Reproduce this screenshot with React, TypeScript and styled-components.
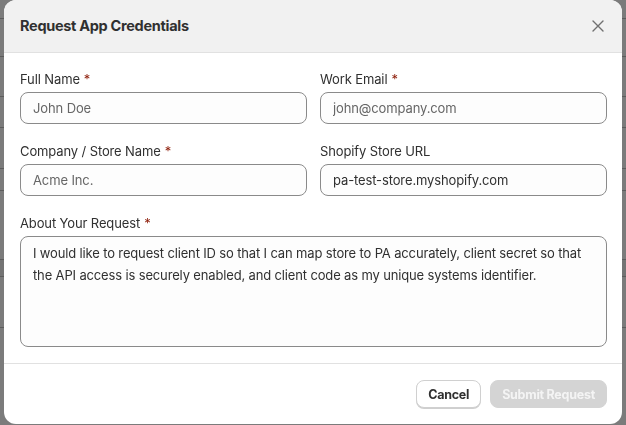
import React from "react";
import styled, { createGlobalStyle } from "styled-components";

const Global = createGlobalStyle`
  html, body {
    margin: 0;
    padding: 0;
    width: 626px;
    height: 425px;
    overflow: hidden;
    background: #7b7b7b;
    font-family: Inter, "Noto Sans", "Liberation Sans", sans-serif;
  }
  * { box-sizing: border-box; }
`;

// page behind the overlay (a table, dimmed)
const Page = styled.div`
  display: flex;
  flex-direction: column;
  width: 626px;
  height: 425px;
`;

const PageRow = styled.div<{ $h: number; $shade?: boolean }>`
  height: ${(p) => p.$h}px;
  flex: none;
  border-bottom: 1px solid #5c5c5c;
  background: ${(p) => (p.$shade ? "#747474" : "transparent")};
`;

const Overlay = styled.div`
  position: fixed;
  inset: 0;
  padding: 0 4px 1px 4px;
  display: flex;
`;

const Modal = styled.div`
  flex: 1;
  display: flex;
  flex-direction: column;
  background: #ffffff;
  border-radius: 12px;
  overflow: hidden;
`;

const Header = styled.div`
  height: 53px;
  flex: none;
  display: flex;
  align-items: center;
  justify-content: space-between;
  padding: 0 14px 1px 16px;
  background: #f1f1f1;
  border-bottom: 1px solid #e1e1e1;
`;

const Title = styled.h2`
  margin: 0;
  font-size: 14.5px;
  font-weight: 650;
  color: #303030;
  letter-spacing: -0.3px;
`;

const CloseBtn = styled.button`
  border: 0;
  background: transparent;
  padding: 0;
  width: 20px;
  height: 20px;
  display: flex;
  align-items: center;
  justify-content: center;
  margin-top: 1px;
`;

const Body = styled.div`
  flex: 1;
  padding: 18px 15px 16px 16px;
  display: flex;
  flex-direction: column;
  gap: 19px;
  border-bottom: 1px solid #e1e1e1;
`;

const Grid = styled.div`
  display: grid;
  grid-template-columns: 1fr 1fr;
  column-gap: 13px;
  row-gap: 19px;
`;

const Field = styled.div`
  display: flex;
  flex-direction: column;
  gap: 5px;
`;

const Label = styled.label`
  font-size: 13px;
  line-height: 16px;
  letter-spacing: -0.12px;
  color: #303030;
`;

const Req = styled.span`
  color: #8e1f0b;
  margin-left: 4px;
`;

const Input = styled.input`
  height: 32px;
  width: 100%;
  border: 1px solid #8a8a8a;
  border-radius: 8px;
  background: #fdfdfd;
  padding: 0 12px;
  font-family: inherit;
  font-size: 13px;
  letter-spacing: -0.12px;
  color: #303030;
  outline: none;
  &::placeholder {
    color: #666666;
  }
`;

const TextArea = styled.textarea`
  height: 111px;
  width: 100%;
  resize: none;
  border: 1px solid #8a8a8a;
  border-radius: 8px;
  background: #fdfdfd;
  padding: 5px 6px 6px 12px;
  font-family: inherit;
  font-size: 13px;
  letter-spacing: -0.15px;
  line-height: 22px;
  color: #303030;
  outline: none;
`;

const Footer = styled.div`
  height: 60px;
  flex: none;
  display: flex;
  align-items: center;
  justify-content: flex-end;
  gap: 9px;
  padding: 0 15px 0 16px;
`;

const Button = styled.button<{ $primary?: boolean }>`
  height: 28px;
  padding: 0 11px;
  border-radius: 8px;
  font-family: inherit;
  font-size: 12.5px;
  font-weight: 650;
  letter-spacing: -0.25px;
  border: 1px solid ${(p) => (p.$primary ? "#d4d4d4" : "#d0d0d0")};
  background: ${(p) => (p.$primary ? "#d4d4d4" : "#ffffff")};
  color: ${(p) => (p.$primary ? "#f4f4f4" : "#303030")};
  box-shadow: ${(p) => (p.$primary ? "none" : "0 1px 0 #cfcfcf")};
`;

const text =
  "I would like to request client ID so that I can map store to PA accurately, client secret so that the API access is securely enabled, and client code as my unique systems identifier.";

export default function App() {
  return (
    <>
      <Global />
      <Page>
        <PageRow $h={19} />
        <PageRow $h={38} />
        <PageRow $h={40} />
        <PageRow $h={31} />
        <PageRow $h={41} />
        <PageRow $h={22} />
        <PageRow $h={69} />
        <PageRow $h={17} $shade />
        <PageRow $h={51} />
      </Page>
      <Overlay>
        <Modal>
          <Header>
            <Title>Request App Credentials</Title>
            <CloseBtn aria-label="Close">
              <svg width="14" height="14" viewBox="0 0 14 14">
                <path d="M2 2 L12 12 M12 2 L2 12" stroke="#707070" strokeWidth="1.4" strokeLinecap="round" />
              </svg>
            </CloseBtn>
          </Header>
          <Body>
            <Grid>
              <Field>
                <Label>Full Name<Req>*</Req></Label>
                <Input placeholder="John Doe" />
              </Field>
              <Field>
                <Label>Work Email<Req>*</Req></Label>
                <Input placeholder="john@company.com" />
              </Field>
              <Field>
                <Label>Company / Store Name<Req>*</Req></Label>
                <Input placeholder="Acme Inc." />
              </Field>
              <Field>
                <Label>Shopify Store URL</Label>
                <Input defaultValue="pa-test-store.myshopify.com" />
              </Field>
            </Grid>
            <Field>
              <Label>About Your Request<Req>*</Req></Label>
              <TextArea defaultValue={text} />
            </Field>
          </Body>
          <Footer>
            <Button>Cancel</Button>
            <Button $primary disabled>Submit Request</Button>
          </Footer>
        </Modal>
      </Overlay>
    </>
  );
}
